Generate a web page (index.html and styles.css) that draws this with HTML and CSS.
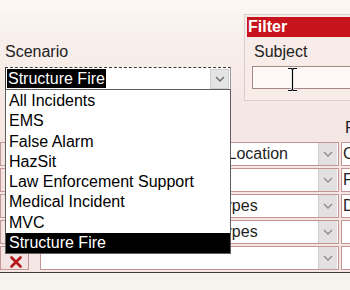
FILE: index.html
```html
<!DOCTYPE html>
<html>
<head>
<meta charset="utf-8">
<link rel="stylesheet" href="styles.css">
</head>
<body>
<div class="page">
  <div class="top">
    <div class="scenario">
      <div class="label">Scenario</div>
      <div class="combo">
        <span class="combo-val">Structure Fire</span>
        <span class="arrow"><svg width="10" height="6" viewBox="0 0 10 6"><polyline points="1,1 5,5 9,1" fill="none" stroke="#6a6a6a" stroke-width="1.4"/></svg></span>
      </div>
    </div>
    <div class="filter">
      <div class="filter-head">Filter</div>
      <div class="filter-body">
        <div class="label">Subject</div>
        <div class="input"></div>
      </div>
    </div>
  </div>

  <div class="grid-head">
    <div class="c1"></div>
    <div class="c2 plain"></div>
    <div class="c3 plain">F</div>
  </div>

  <div class="rows">
    <div class="row">
      <div class="c1"></div>
      <div class="c2"><div class="sel"><span class="sel-text ind-loc">Incident Location</span><span class="sel-arrow"><svg width="10" height="6" viewBox="0 0 10 6"><polyline points="1,1 5,5 9,1" fill="none" stroke="#8a8a8a" stroke-width="1.3"/></svg></span></div></div>
      <div class="c3">C</div>
    </div>
    <div class="row">
      <div class="c1"></div>
      <div class="c2"><div class="sel"><span class="sel-text"></span><span class="sel-arrow"><svg width="10" height="6" viewBox="0 0 10 6"><polyline points="1,1 5,5 9,1" fill="none" stroke="#8a8a8a" stroke-width="1.3"/></svg></span></div></div>
      <div class="c3">F</div>
    </div>
    <div class="row">
      <div class="c1"></div>
      <div class="c2"><div class="sel"><span class="sel-text ind-typ">All Types</span><span class="sel-arrow"><svg width="10" height="6" viewBox="0 0 10 6"><polyline points="1,1 5,5 9,1" fill="none" stroke="#8a8a8a" stroke-width="1.3"/></svg></span></div></div>
      <div class="c3">D</div>
    </div>
    <div class="row">
      <div class="c1"></div>
      <div class="c2"><div class="sel"><span class="sel-text ind-typ">All Types</span><span class="sel-arrow"><svg width="10" height="6" viewBox="0 0 10 6"><polyline points="1,1 5,5 9,1" fill="none" stroke="#8a8a8a" stroke-width="1.3"/></svg></span></div></div>
      <div class="c3"></div>
    </div>
    <div class="row">
      <div class="c1 xcell"><svg width="12" height="12" viewBox="0 0 12 12"><path d="M1.5 1.5 L10.5 10.5 M10.5 1.5 L1.5 10.5" stroke="#b3151a" stroke-width="2.6" stroke-linecap="round"/></svg></div>
      <div class="c2"><div class="sel"><span class="sel-text"></span><span class="sel-arrow"><svg width="10" height="6" viewBox="0 0 10 6"><polyline points="1,1 5,5 9,1" fill="none" stroke="#8a8a8a" stroke-width="1.3"/></svg></span></div></div>
      <div class="c3"></div>
    </div>
  </div>

  <div class="foot"></div>

  <ul class="listbox">
    <li>All Incidents</li>
    <li>EMS</li>
    <li>False Alarm</li>
    <li>HazSit</li>
    <li>Law Enforcement Support</li>
    <li>Medical Incident</li>
    <li>MVC</li>
    <li class="on">Structure Fire</li>
  </ul>

  <svg class="ibeam" width="11" height="25" viewBox="0 0 11 25">
    <path d="M1 1.5 H4.5 L5.5 2.5 L6.5 1.5 H10 M5.5 2.5 V22.5 M1 23.5 H4.5 L5.5 22.5 L6.5 23.5 H10" fill="none" stroke="#fff" stroke-width="3"/>
    <path d="M1 1.5 H4.5 L5.5 2.5 L6.5 1.5 H10 M5.5 2.5 V22.5 M1 23.5 H4.5 L5.5 22.5 L6.5 23.5 H10" fill="none" stroke="#000" stroke-width="1.2"/>
  </svg>
</div>
</body>
</html>
```

FILE: styles.css
```css
* { box-sizing: border-box; }
html, body { margin: 0; padding: 0; }
body {
  font-family: "Liberation Sans", Arial, sans-serif;
  font-size: 16px;
  color: #1e1e1e;
}
.page {
  position: relative;
  width: 350px;
  height: 290px;
  overflow: hidden;
  background: linear-gradient(#fcf8f4 0px, #f8efeb 40px, #f5e8e4 100px, #f4e6e2 270px);
}
.top {
  display: flex;
  padding-top: 14px;
  height: 101px;
}
.scenario {
  flex: none;
  margin-left: 5px;
  margin-top: 29px;
  width: 226px;
}
.label {
  line-height: 18px;
  height: 18px;
  color: #222;
}
.combo {
  margin-top: 6px;
  height: 23px;
  border: 1px dashed #3a3a3a;
  border-left-style: solid;
  border-right: 1px solid #9a9a9a;
  background: #fff;
  display: flex;
  align-items: flex-start;
  justify-content: space-between;
  padding: 1px 1px 0 1px;
}
.combo-val {
  background: #000;
  color: #fff;
  line-height: 19px;
  height: 19px;
  padding: 0 1px 0 1px;
}
.arrow {
  width: 19px;
  height: 20px;
  background: #e4e4e4;
  border: 1px solid #cfcfcf;
  display: flex;
  align-items: center;
  justify-content: center;
}
.filter {
  flex: none;
  margin-left: 13px;
  width: 120px;
  height: 87px;
  border: 1px solid #d9d0cd;
  border-right: none;
  padding: 2px 0 0 2px;
  background: #f7ece8;
}
.filter-head {
  height: 20px;
  background: #c7131c;
  color: #fff;
  font-weight: bold;
  line-height: 20px;
  padding-left: 1px;
}
.filter-body {
  padding: 6px 0 0 5px;
}
.filter-body .label {
  padding-left: 2px;
}
.input {
  margin-top: 5px;
  height: 23px;
  border: 1px solid #a48888;
  background: #fdf7f5;
}
.grid-head {
  display: flex;
  height: 41px;
  padding-top: 16px;
  line-height: 18px;
}
.rows {
  display: flex;
  flex-direction: column;
  gap: 2px;
}
.row {
  display: flex;
  height: 24px;
}
.c1 {
  width: 29px;
  flex: none;
  border: 1px solid #c49595;
  background: #f3e3e2;
}
.grid-head .c1 { border: none; background: none; }
.c2 {
  width: 299px;
  margin-left: 11px;
  flex: none;
  border: 1px solid #c49595;
  background: #fff;
}
.c3 {
  margin-left: 2px;
  width: 30px;
  flex: none;
  border: 1px solid #c49595;
  background: #fff;
  padding-left: 1px;
  line-height: 22px;
  overflow: hidden;
}
.grid-head .plain { border: none; background: none; padding-left: 4px; }
.sel {
  display: flex;
  height: 22px;
  justify-content: space-between;
}
.sel-text {
  line-height: 22px;
  white-space: nowrap;
  overflow: hidden;
  padding-left: 4px;
}
.ind-loc { padding-left: 126px; }
.ind-typ { padding-left: 152px; }
.sel-arrow {
  width: 19px;
  height: 22px;
  background: #e2e0e0;
  border-left: 1px solid #d0cccc;
  display: flex;
  align-items: center;
  justify-content: center;
  margin-right: 1px;
}
.xcell {
  display: flex;
  align-items: flex-end;
  padding: 0 0 1px 9px;
}
.foot {
  margin-top: 2px;
  height: 18px;
  border-top: 1px solid #3c3c3c;
  background: #f6f2ee;
}
.listbox {
  position: absolute;
  left: 5px;
  top: 89px;
  width: 226px;
  height: 165px;
  margin: 0;
  padding: 1px 0 0 0;
  list-style: none;
  background: #fff;
  border: 1px solid #5e5e5e;
}
.listbox li {
  height: 20.25px;
  line-height: 20px;
  padding-left: 3px;
  color: #000;
  white-space: nowrap;
}
.listbox li.on {
  background: #000;
  color: #fff;
}
.ibeam {
  position: absolute;
  left: 287px;
  top: 67px;
}
```
